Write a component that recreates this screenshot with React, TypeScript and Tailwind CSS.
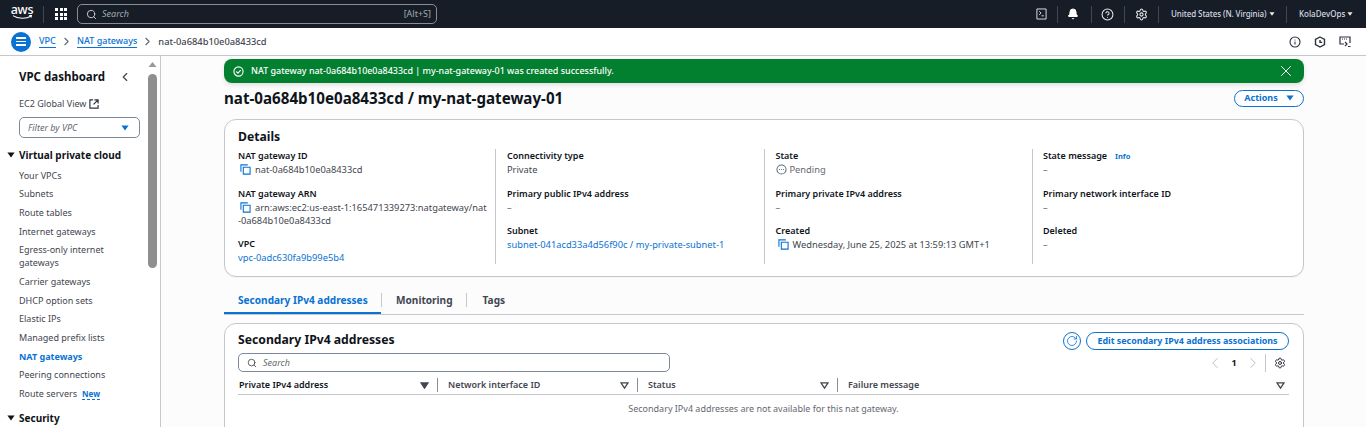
import { ChevronLeft, ChevronRight, Search, X, Settings, CircleHelp, Bell, RotateCw, Info } from 'lucide-react';

function Caret({ className = '' }: { className?: string }) {
  return (
    <svg viewBox="0 0 10 7" className={className} fill="currentColor">
      <path d="M0.5 0.5h9L5 6.5z" />
    </svg>
  );
}

function SortCaret({ active }: { active?: boolean }) {
  return (
    <svg viewBox="0 0 10 8" className="w-[9px] h-[7px] text-[#424650]" fill={active ? 'currentColor' : 'none'} stroke="currentColor" strokeWidth="1.5">
      <path d="M1 1h8L5 7z" />
    </svg>
  );
}

function CopyIcon({ className = '' }: { className?: string }) {
  return (
    <svg viewBox="0 0 12 12" className={`w-[11px] h-[11px] shrink-0 text-[#0972d3] ${className}`} fill="none" stroke="currentColor" strokeWidth="1.2">
      <path d="M8.5 1H1v7.5" />
      <path d="M3.6 3.6h7.4v7.4H3.6z" />
    </svg>
  );
}

const navItems = [
  'Your VPCs',
  'Subnets',
  'Route tables',
  'Internet gateways',
  'Egress-only internet gateways',
  'Carrier gateways',
  'DHCP option sets',
  'Elastic IPs',
  'Managed prefix lists',
  'NAT gateways',
  'Peering connections',
];

function TopBar() {
  return (
    <header className="h-[28px] bg-[#161d26] flex items-center text-white shrink-0">
      <div className="w-[43px] flex flex-col items-center pl-[1px] relative">
        <span className="text-[12.5px] leading-[10px] font-medium tracking-[-0.2px] mt-[-4px]">aws</span>
        <svg viewBox="0 0 22 5" className="w-[21px] h-[5px]" fill="none" stroke="#fff" strokeWidth="1.1">
          <path d="M1 0.6c5 3.4 14 3.6 19 .3" />
          <path d="M18 0.5l2.4-.1-.6 2.2" />
        </svg>
      </div>
      <div className="w-px h-[17px] bg-[#424650]" />
      <div className="ml-[11px] w-[12px] grid grid-cols-3 gap-[1.5px]">
        {Array.from({ length: 9 }).map((_, i) => (
          <span key={i} className="w-[3px] h-[3px] bg-white" />
        ))}
      </div>
      <div className="ml-[10px] w-[360px] h-[20px] border border-[#8c8c94] rounded-[5px] flex items-center pl-[8px] pr-[5px] text-[9px]">
        <Search className="w-[11px] h-[11px] text-[#d1d5db]" strokeWidth={2} />
        <span className="ml-[5px] italic text-[#a3a9b3]">Search</span>
        <span className="ml-auto text-[#a3a9b3]">[Alt+S]</span>
      </div>
      <div className="ml-auto flex items-center h-full">
        <svg viewBox="0 0 12 13" className="w-[11px] h-[12px] mr-[10px]" fill="none" stroke="#e9ebed" strokeWidth="1">
          <path d="M1 1h10v11H1z" />
          <path d="M3.5 3.5l2 2-2 2M6 8.5h2.5" />
        </svg>
        <div className="w-px h-[17px] bg-[#424650]" />
        <Bell className="w-[12px] h-[12px] ml-[9px] mr-[12px] fill-white" strokeWidth={2} />
        <div className="w-px h-[17px] bg-[#424650] mr-[9px]" />
        <CircleHelp className="w-[13px] h-[13px] mr-[10px] text-[#e9ebed]" strokeWidth={1.9} />
        <div className="w-px h-[17px] bg-[#424650] mr-[10px]" />
        <Settings className="w-[13px] h-[13px] mr-[10px] text-[#e9ebed]" strokeWidth={1.9} />
        <div className="w-px h-[17px] bg-[#424650] mr-[12px]" />
        <span className="w-[94px] text-[8px] tracking-[-0.1px] font-medium text-[#d5dbe5] whitespace-nowrap">United States (N. Virginia)</span>
        <Caret className="w-[6px] h-[4px] ml-[4px] mr-[11px] text-[#e9ebed]" />
        <div className="w-px h-[17px] bg-[#424650] mr-[12px]" />
        <span className="w-[45px] text-[8px] font-medium text-[#d5dbe5] whitespace-nowrap">KolaDevOps</span>
        <Caret className="w-[6px] h-[4px] ml-[3px] mr-[13px] text-[#e9ebed]" />
      </div>
    </header>
  );
}

function Breadcrumbs() {
  return (
    <div className="h-[28px] bg-white border-b border-[#c6c6cd] flex items-center shrink-0 text-[9.3px]">
      <div className="ml-[11px] w-[20px] h-[20px] rounded-full bg-[#0972d3] flex flex-col items-center justify-center gap-[2px]">
        <span className="w-[10px] h-[1.5px] bg-white" />
        <span className="w-[10px] h-[1.5px] bg-white" />
        <span className="w-[10px] h-[1.5px] bg-white" />
      </div>
      <a className="ml-[8px] w-[17px] text-[9px] text-[#0972d3] border-b border-[#0972d3] leading-[12px] font-medium">VPC</a>
      <ChevronRight className="w-[13px] h-[13px] mx-[4px] text-[#656871]" />
      <a className="text-[9px] text-[#0972d3] border-b border-[#0972d3] leading-[12px] font-medium">NAT gateways</a>
      <ChevronRight className="w-[13px] h-[13px] mx-[4px] text-[#656871]" />
      <span className="text-[#424650] font-medium">nat-0a684b10e0a8433cd</span>
      <div className="ml-auto flex items-center gap-[13px] mr-[15px] text-[#2c333d]">
        <Info className="w-[12px] h-[12px]" strokeWidth={2.2} />
        <svg viewBox="0 0 12 12" className="w-[12px] h-[12px]" fill="none" stroke="currentColor" strokeWidth="1.4">
          <path d="M6 1l4.5 2.5v5L6 11 1.5 8.5v-5z" />
          <path d="M6 4v2.4h2.2" />
        </svg>
        <svg viewBox="0 0 12 12" className="w-[12px] h-[12px]" fill="none" stroke="currentColor" strokeWidth="1.2">
          <path d="M11 7V1H1v7h4" />
          <path d="M3 3h1M5 3h1M7 3h1" />
          <path d="M6 6l2 2-2 2M9 10.5h2.5" />
        </svg>
      </div>
    </div>
  );
}

function Sidebar() {
  return (
    <aside className="w-[161px] shrink-0 border-r border-[#c6c6cd] bg-white flex overflow-hidden relative">
      <nav className="w-[148px] pl-[19px] pt-[13px] text-[9px] text-[#424650]">
        <div className="flex items-center justify-between h-[16px] pr-[16px] text-[#0f141a]">
          <span className="text-[11.5px] font-bold">VPC dashboard</span>
          <ChevronLeft className="w-[14px] h-[14px] text-[#424650]" strokeWidth={2} />
        </div>
        <div className="mt-[12px] h-[13px] flex items-center gap-[3px] leading-[13px]">
          EC2 Global View
          <svg viewBox="0 0 11 11" className="w-[10px] h-[10px] text-[#2c333d]" fill="none" stroke="currentColor" strokeWidth="1.3">
            <path d="M4.5 1H1v9h9V6.5" />
            <path d="M6 1h4v4M10 1L5 6" />
          </svg>
        </div>
        <div className="mt-[7px] w-[121px] h-[21px] border border-[#7d8998] rounded-[5px] flex items-center justify-between pl-[8px] pr-[10px] italic text-[#656871]">
          Filter by VPC
          <Caret className="w-[8px] h-[6px] text-[#0972d3]" />
        </div>
        <div className="mt-[10px] h-[14px] relative flex items-center text-[#0f141a] text-[10px] font-bold">
          <Caret className="w-[8px] h-[6px] absolute left-[-12px] top-[4px]" />
          Virtual private cloud
        </div>
        <ul className="mt-[6.6px] flex flex-col gap-[5.7px] leading-[13px]">
          {navItems.map((item) => (
            <li key={item} className={`max-w-[100px] ${item === 'NAT gateways' ? 'text-[#0972d3] font-bold' : ''}`}>
              {item}
            </li>
          ))}
          <li className="flex items-center gap-[5px]">
            Route servers
            <span className="text-[#0972d3] font-bold text-[8px] leading-[11px] border-b border-dashed border-[#0972d3]">New</span>
          </li>
        </ul>
        <div className="mt-[11px] h-[14px] relative flex items-center text-[#0f141a] text-[10px] font-bold">
          <Caret className="w-[8px] h-[6px] absolute left-[-12px] top-[4px]" />
          Security
        </div>
      </nav>
      <div className="w-[12px] flex flex-col items-start pt-[6px]">
        <svg viewBox="0 0 8 5" className="w-[9px] h-[5px] text-[#9a9a9a]" fill="currentColor">
          <path d="M0 5L4 0l4 5z" />
        </svg>
        <div className="mt-[7px] w-[9px] h-[194px] bg-[#8f8f8f] rounded-full" />
      </div>
    </aside>
  );
}

function Field({ label, children, extra }: { label: string; children?: React.ReactNode; extra?: React.ReactNode }) {
  return (
    <div className="mb-[10.5px]">
      <div className="h-[14px] leading-[14px] font-semibold text-[#0f141a] whitespace-nowrap">
        {label}
        {extra}
      </div>
      <div className="leading-[13px] text-[9.3px] text-[#424650]">{children ?? <span className="text-[#656871]">–</span>}</div>
    </div>
  );
}

function Details() {
  return (
    <section className="mt-[11px] h-[158px] bg-white border border-[#c6c6cd] rounded-[12px] shadow-[0_1px_1px_rgba(0,0,0,0.03)] pl-[13px] pt-[9px] text-[9px]">
      <h2 className="text-[12.2px] leading-[16px] font-bold text-[#0f141a]">Details</h2>
      <div className="mt-[4px] grid grid-cols-[257px_268.5px_268.5px_1fr]">
        <div className="h-[115px]">
          <Field label="NAT gateway ID">
            <span className="flex items-center gap-[4px] pl-[2px]">
              <CopyIcon />
              nat-0a684b10e0a8433cd
            </span>
          </Field>
          <Field label="NAT gateway ARN">
            <span className="block whitespace-nowrap">
              <CopyIcon className="inline-block mr-[4px] ml-[2px] align-[-2px]" />
              arn:aws:ec2:us-east-1:165471339273:natgateway/nat
              <br />
              -0a684b10e0a8433cd
            </span>
          </Field>
          <Field label="VPC">
            <a className="text-[#0972d3]">vpc-0adc630fa9b99e5b4</a>
          </Field>
        </div>
        <div className="h-[115px] border-l border-[#c6c6cd] pl-[11px]">
          <Field label="Connectivity type">Private</Field>
          <Field label="Primary public IPv4 address" />
          <Field label="Subnet">
            <a className="text-[#0972d3] whitespace-nowrap">subnet-041acd33a4d56f90c / my-private-subnet-1</a>
          </Field>
        </div>
        <div className="h-[115px] border-l border-[#c6c6cd] pl-[11px]">
          <Field label="State">
            <span className="flex items-center gap-[3px] text-[#656871]">
              <svg viewBox="0 0 12 12" className="w-[11px] h-[11px]" fill="none" stroke="#5f6b7a" strokeWidth="1.1">
                <circle cx="6" cy="6" r="5" />
                <path d="M3.4 6h1M5.5 6h1M7.6 6h1" />
              </svg>
              Pending
            </span>
          </Field>
          <Field label="Primary private IPv4 address" />
          <Field label="Created">
            <span className="flex items-center gap-[4px] pl-[2px] whitespace-nowrap">
              <CopyIcon />
              Wednesday, June 25, 2025 at 13:59:13 GMT+1
            </span>
          </Field>
        </div>
        <div className="h-[115px] border-l border-[#c6c6cd] pl-[10px]">
          <Field
            label="State message"
            extra={<span className="ml-[8px] text-[#0972d3] text-[7.5px] font-bold">Info</span>}
          />
          <Field label="Primary network interface ID" />
          <Field label="Deleted" />
        </div>
      </div>
    </section>
  );
}

function Tabs() {
  return (
    <div className="mt-[13px] h-[25px] border-b border-[#c6c6cd] flex items-start text-[10.1px] font-bold text-[#424650]">
      <div className="h-[24px] w-[157px] border-b-2 border-[#0972d3] text-[#0972d3] pl-[14px] leading-[20px] whitespace-nowrap">
        Secondary IPv4 addresses
      </div>
      <div className="h-[14px] mt-[3px] w-px bg-[#c6c6cd]" />
      <div className="pl-[14px] pr-[13px] leading-[20px]">Monitoring</div>
      <div className="h-[14px] mt-[3px] w-px bg-[#c6c6cd]" />
      <div className="pl-[16px] leading-[20px]">Tags</div>
    </div>
  );
}

const columns = [
  { name: 'Private IPv4 address', active: true },
  { name: 'Network interface ID' },
  { name: 'Status' },
];

function AddressTable() {
  return (
    <section className="mt-[8px] h-[120px] bg-white border border-[#c6c6cd] rounded-[12px] pl-[13px] pr-[14px] pt-[8px] text-[9px]">
      <div className="flex items-center h-[18px]">
        <h2 className="text-[12.2px] font-bold text-[#0f141a] mt-[-2px]">Secondary IPv4 addresses</h2>
        <div className="ml-auto w-[18px] h-[18px] rounded-full border border-[#0972d3] flex items-center justify-center text-[#0972d3]">
          <RotateCw className="w-[12px] h-[12px]" strokeWidth={1.6} />
        </div>
        <div className="ml-[5px] w-[203px] h-[18px] rounded-full border border-[#0972d3] text-[#0972d3] text-[8.9px] font-bold flex items-center justify-center whitespace-nowrap">
          Edit secondary IPv4 address associations
        </div>
      </div>
      <div className="mt-[3px] h-[19px] flex items-center">
        <div className="w-[432px] h-[19px] border border-[#7d8998] rounded-[5px] flex items-center pl-[8px] italic text-[#656871]">
          <Search className="w-[10px] h-[10px] text-[#424650] mr-[6px]" strokeWidth={2} />
          Search
        </div>
        <div className="ml-auto flex items-center text-[#0f141a] font-bold">
          <ChevronLeft className="w-[18px] h-[18px] text-[#b4b4bb]" strokeWidth={1.2} />
          <span className="w-[20px] text-center">1</span>
          <ChevronRight className="w-[18px] h-[18px] text-[#b4b4bb]" strokeWidth={1.2} />
          <div className="ml-[3px] w-px h-[18px] bg-[#c6c6cd] mr-[8px]" />
          <Settings className="w-[12px] h-[12px] text-[#2c333d] mr-[3px]" strokeWidth={2} />
        </div>
      </div>
      <div className="mt-[4px] h-[19px] flex items-center border-b border-[#c6c6cd] font-semibold text-[#424650]">
        {columns.map((col) => (
          <div key={col.name} className={`w-[200px] flex items-center h-[14px] pr-[8px] pl-[10px] first:pl-[1px] border-r border-[#8c8c94] ${col.active ? 'text-[#0f141a]' : ''}`}>
            {col.name}
            <span className="ml-auto">
              <SortCaret active={col.active} />
            </span>
          </div>
        ))}
        <div className="flex-1 flex items-center pl-[10px] pr-[4px]">
          Failure message
          <span className="ml-auto">
            <SortCaret />
          </span>
        </div>
      </div>
      <p className="mt-[7px] text-center text-[#656871]">
        Secondary IPv4 addresses are not available for this nat gateway.
      </p>
    </section>
  );
}

export default function App() {
  return (
    <div className="w-[1366px] h-[427px] overflow-hidden flex flex-col bg-white font-['Noto_Sans',sans-serif]">
      <TopBar />
      <Breadcrumbs />
      <div className="flex flex-1 min-h-0">
        <Sidebar />
        <main className="flex-1 bg-[#fcfcfd] pl-[63px] pr-[62px] pt-[3px] min-w-0">
          <div className="h-[24px] bg-[#037f30] rounded-[8px] shadow-[0_2px_4px_rgba(0,0,0,0.12)] text-white flex items-center pl-[9px] pr-[9px] text-[8.95px] font-medium">
            <svg viewBox="0 0 12 12" className="w-[11px] h-[11px] mr-[7px]" fill="none" stroke="#fff" strokeWidth="1.2">
              <circle cx="6" cy="6" r="5" />
              <path d="M3.6 6l1.8 1.8 3-3.4" />
            </svg>
            NAT gateway nat-0a684b10e0a8433cd | my-nat-gateway-01 was created successfully.
            <X className="ml-auto w-[18px] h-[18px]" strokeWidth={1.3} />
          </div>
          <div className="mt-[5px] h-[20px] flex items-center justify-between">
            <h1 className="text-[15.15px] font-bold text-[#0f141a]">nat-0a684b10e0a8433cd / my-nat-gateway-01</h1>
            <button className="w-[70px] h-[17px] rounded-full border border-[#0972d3] text-[#0972d3] text-[9px] font-bold flex items-center justify-center gap-[8px] bg-white">
              Actions
              <Caret className="w-[8px] h-[6px]" />
            </button>
          </div>
          <Details />
          <Tabs />
          <AddressTable />
        </main>
      </div>
    </div>
  );
}
